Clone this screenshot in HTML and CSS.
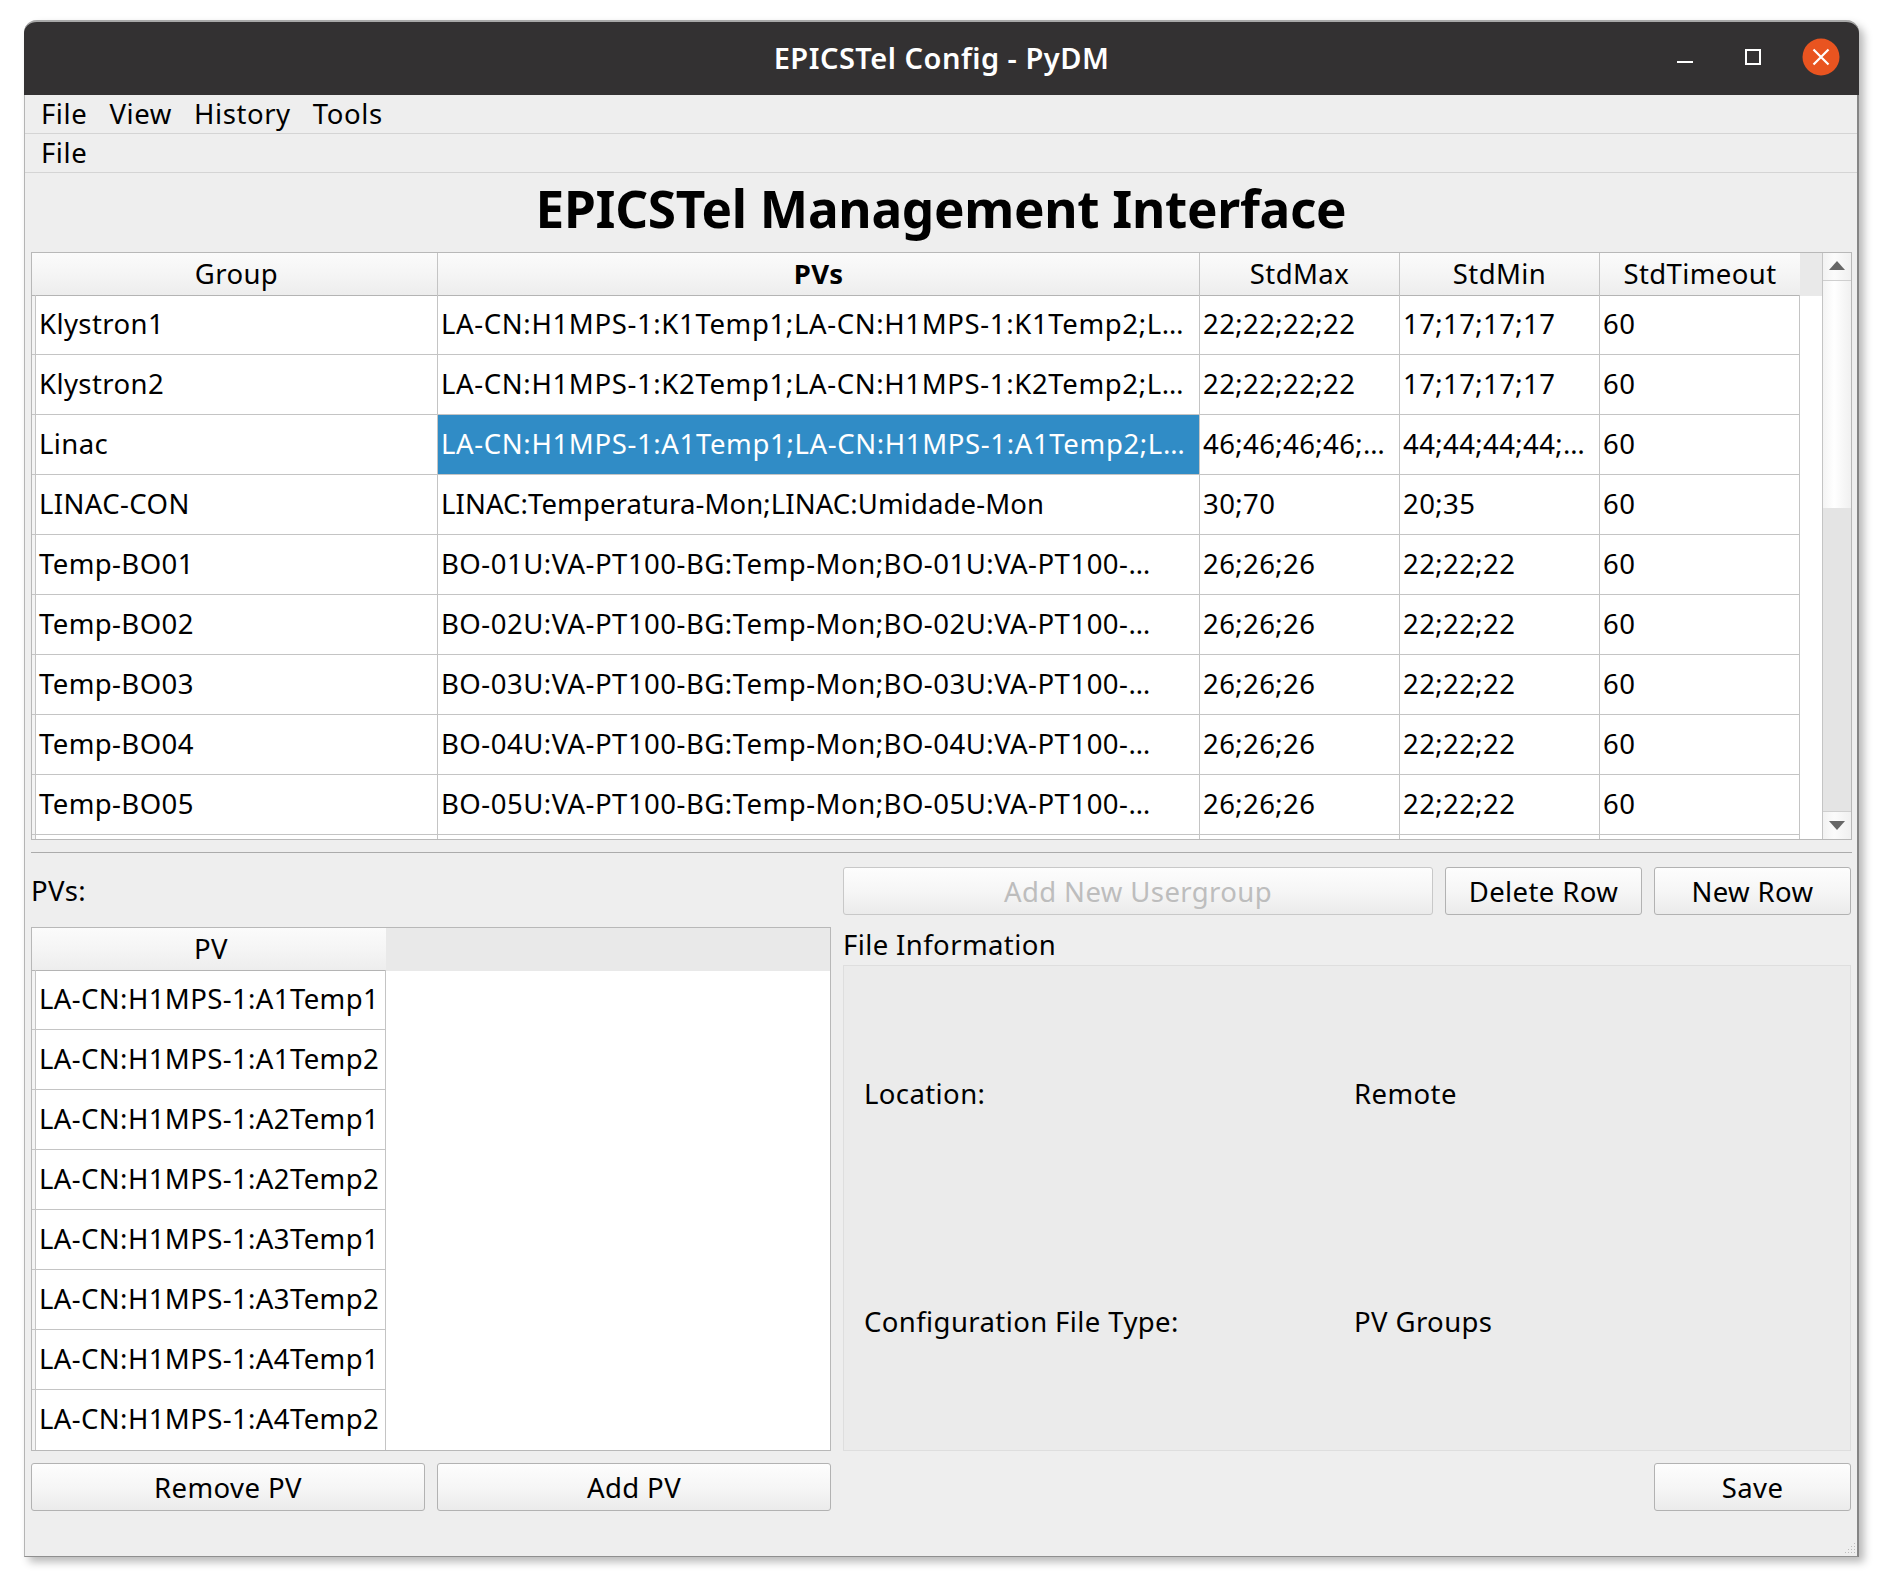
FILE: index.html
```html
<!DOCTYPE html>
<html lang="en">
<head>
<meta charset="utf-8">
<title>EPICSTel Config - PyDM</title>
<link rel="stylesheet" href="styles.css">
</head>
<body>
<div class="window">
  <header class="titlebar">
    <div></div>
    <div class="wintitle">EPICSTel Config - PyDM</div>
    <div class="controls">
      <svg class="ctl" viewBox="0 0 68 40"><rect x="24" y="24" width="16" height="2" fill="#fff"/></svg>
      <svg class="ctl" viewBox="0 0 68 40"><rect x="25" y="13" width="14" height="14" fill="none" stroke="#fff" stroke-width="2"/></svg>
      <svg class="ctl" viewBox="0 0 68 40"><circle cx="32" cy="20" r="18.5" fill="#e95420"/><path d="M24.500 12.500L39.500 27.500M39.500 12.500L24.500 27.500" stroke="#fff" stroke-width="2.200" fill="none"/></svg>
    </div>
  </header>
  <nav class="menubar"><span>File</span><span>View</span><span>History</span><span>Tools</span></nav>
  <nav class="menubar"><span>File</span></nav>
  <h1 class="heading">EPICSTel Management Interface</h1>

  <section class="maintable">
    <div class="mainview">
      <div class="hdr cols5">
        <div class="hcell hfirst">Group</div><div class="hcell hbold">PVs</div><div class="hcell">StdMax</div><div class="hcell">StdMin</div><div class="hcell hlast">StdTimeout</div><div class="hfill"></div>
      </div>
      <div class="row rows5"><div class="cell">Klystron1</div><div class="cell cell-long">LA-CN:H1MPS-1:K1Temp1;LA-CN:H1MPS-1:K1Temp2;L…</div><div class="cell">22;22;22;22</div><div class="cell">17;17;17;17</div><div class="cell">60</div></div>
      <div class="row rows5"><div class="cell">Klystron2</div><div class="cell cell-long">LA-CN:H1MPS-1:K2Temp1;LA-CN:H1MPS-1:K2Temp2;L…</div><div class="cell">22;22;22;22</div><div class="cell">17;17;17;17</div><div class="cell">60</div></div>
      <div class="row rows5"><div class="cell">Linac</div><div class="cell cell-long selected">LA-CN:H1MPS-1:A1Temp1;LA-CN:H1MPS-1:A1Temp2;L…</div><div class="cell">46;46;46;46;…</div><div class="cell">44;44;44;44;…</div><div class="cell">60</div></div>
      <div class="row rows5"><div class="cell">LINAC-CON</div><div class="cell cell-tight">LINAC:Temperatura-Mon;LINAC:Umidade-Mon</div><div class="cell">30;70</div><div class="cell">20;35</div><div class="cell">60</div></div>
      <div class="row rows5"><div class="cell">Temp-BO01</div><div class="cell cell-bo">BO-01U:VA-PT100-BG:Temp-Mon;BO-01U:VA-PT100-…</div><div class="cell">26;26;26</div><div class="cell">22;22;22</div><div class="cell">60</div></div>
      <div class="row rows5"><div class="cell">Temp-BO02</div><div class="cell cell-bo">BO-02U:VA-PT100-BG:Temp-Mon;BO-02U:VA-PT100-…</div><div class="cell">26;26;26</div><div class="cell">22;22;22</div><div class="cell">60</div></div>
      <div class="row rows5"><div class="cell">Temp-BO03</div><div class="cell cell-bo">BO-03U:VA-PT100-BG:Temp-Mon;BO-03U:VA-PT100-…</div><div class="cell">26;26;26</div><div class="cell">22;22;22</div><div class="cell">60</div></div>
      <div class="row rows5"><div class="cell">Temp-BO04</div><div class="cell cell-bo">BO-04U:VA-PT100-BG:Temp-Mon;BO-04U:VA-PT100-…</div><div class="cell">26;26;26</div><div class="cell">22;22;22</div><div class="cell">60</div></div>
      <div class="row rows5"><div class="cell">Temp-BO05</div><div class="cell cell-bo">BO-05U:VA-PT100-BG:Temp-Mon;BO-05U:VA-PT100-…</div><div class="cell">26;26;26</div><div class="cell">22;22;22</div><div class="cell">60</div></div>
      <div class="row rows5"><div class="cell"></div><div class="cell"></div><div class="cell"></div><div class="cell"></div><div class="cell"></div></div>
    </div>
    <div class="scrollbar">
      <div class="sbtn sbtn-up"><svg class="arrow" viewBox="0 0 16 9"><path d="M8 0L16 9H0Z" fill="#666"/></svg></div>
      <div class="strack"></div>
      <div class="shandle"></div>
      <div class="sbtn sbtn-down"><svg class="arrow" viewBox="0 0 16 9"><path d="M8 9L16 0H0Z" fill="#666"/></svg></div>
    </div>
  </section>

  <hr class="sep">

  <section class="lower">
    <div class="label">PVs:</div>
    <div class="actions">
      <button class="btn btn-wide" disabled>Add New Usergroup</button>
      <button class="btn btn-fixed">Delete Row</button>
      <button class="btn btn-fixed">New Row</button>
    </div>
    <div class="pvtable">
      <div class="hdr cols1"><div class="hcell hfirst hlast">PV</div><div class="hfill"></div></div>
      <div class="row rows1"><div class="cell">LA-CN:H1MPS-1:A1Temp1</div></div>
      <div class="row rows1"><div class="cell">LA-CN:H1MPS-1:A1Temp2</div></div>
      <div class="row rows1"><div class="cell">LA-CN:H1MPS-1:A2Temp1</div></div>
      <div class="row rows1"><div class="cell">LA-CN:H1MPS-1:A2Temp2</div></div>
      <div class="row rows1"><div class="cell">LA-CN:H1MPS-1:A3Temp1</div></div>
      <div class="row rows1"><div class="cell">LA-CN:H1MPS-1:A3Temp2</div></div>
      <div class="row rows1"><div class="cell">LA-CN:H1MPS-1:A4Temp1</div></div>
      <div class="row rows1 row-last"><div class="cell">LA-CN:H1MPS-1:A4Temp2</div></div>
    </div>
    <div class="fileinfo">
      <div class="filetitle">File Information</div>
      <div class="infobox">
        <div class="infocell">Location:</div><div class="infocell">Remote</div>
        <div class="infocell">Configuration File Type:</div><div class="infocell">PV Groups</div>
      </div>
    </div>
    <div class="pvbuttons">
      <button class="btn">Remove PV</button>
      <button class="btn">Add PV</button>
    </div>
    <div class="savebar"><button class="btn btn-fixed">Save</button></div>
  </section>

  <svg class="grip" viewBox="0 0 12 12"><g fill="#bdbdbd"><rect x="10" y="0" width="1" height="1"/><rect x="7" y="3" width="1" height="1"/><rect x="10" y="3" width="1" height="1"/><rect x="4" y="6" width="1" height="1"/><rect x="7" y="6" width="1" height="1"/><rect x="10" y="6" width="1" height="1"/><rect x="1" y="9" width="1" height="1"/><rect x="4" y="9" width="1" height="1"/><rect x="7" y="9" width="1" height="1"/><rect x="10" y="9" width="1" height="1"/></g></svg>
</div>
</body>
</html>
```

FILE: styles.css
```css
* { box-sizing: border-box; }
html, body { margin: 0; background: #fff; }
body {
  height: 1585px;
  padding: 20px 0 0 24px;
  font-family: "Noto Sans", sans-serif;
  font-size: 27.5px;
  color: #000;
  overflow: hidden;
}
.window {
  position: relative;
  width: 1835px;
  height: 1537px;
  background: #eeeeee;
  border-left: 1px solid #b4b4b4;
  border-right: 2px solid #858585;
  border-bottom: 1px solid #8f8f8f;
  border-radius: 13px 13px 0 0;
  box-shadow: 5px 5px 9px rgba(0,0,0,.28);
  letter-spacing: 0.4px;
}
.titlebar {
  display: grid;
  grid-template-columns: 1fr auto 1fr;
  align-items: center;
  height: 75px;
  margin-left: -1px;
  margin-right: -2px;
  background: #333132;
  border-top: 2px solid #a8a8a8;
  border-radius: 13px 13px 0 0;
  color: #fff;
}
.wintitle { font-size: 29px; font-weight: 600; letter-spacing: 0.5px; padding-bottom: 2px; }
.controls { display: flex; justify-content: flex-end; padding-right: 2px; padding-bottom: 3px; }
.ctl { width: 68px; height: 40px; display: block; }
.menubar {
  display: flex;
  gap: 22px;
  height: 39px;
  padding: 0 0 2px 16px;
  align-items: center;
  letter-spacing: 0.6px;
  border-bottom: 1px solid #d4d4d4;
}
.heading {
  margin: 0;
  height: 79px;
  font-size: 51.3px;
  line-height: 71px;
  font-weight: 700;
  text-align: center;
  letter-spacing: -0.3px;
}
.maintable {
  display: flex;
  height: 588px;
  margin: 0 5px 0 6px;
  background: #fff;
  border: 1px solid #b8b8b8;
}
.mainview { width: 1790px; overflow: hidden; }
.hdr { height: 42px; background: #e9e9e9; }
.cols5 { display: grid; grid-template-columns: 406px 762px 200px 200px 200px 22px; }
.cols1 { display: grid; grid-template-columns: 354px 1fr; }
.hcell {
  text-align: center;
  line-height: 42px;
  background: linear-gradient(#fbfbfb, #f5f5f5 50%, #ededed);
  border-right: 1px solid #c4c4c4;
  border-bottom: 1px solid #b4b4b4;
}
.hfirst { padding-left: 4px; }
.hbold { font-weight: 700; }
.hlast { border-right: 0; }
.hfill { background: #e9e9e9; }
.row {
  display: grid;
  height: 60px;
  border-bottom: 1px solid #c4c4c4;
  background: linear-gradient(to right, #f4f4f4 3px, transparent 3px);
}
.rows5 { width: 1768px; grid-template-columns: 406px 762px 200px 200px 200px; }
.rows1 { width: 354px; grid-template-columns: 354px; }
.cell {
  line-height: 58px;
  padding-left: 3px;
  white-space: nowrap;
  overflow: hidden;
  border-right: 1px solid #c4c4c4;
}
.cell:first-child { margin-left: 3px; padding-left: 3px; border-left: 1px solid #c4c4c4; }
.cell-long { letter-spacing: 0.65px; }
.cell-bo { letter-spacing: 0.5px; }
.cell-tight { letter-spacing: 0.1px; }
.selected { background: #308cc6; color: #fff; }
.scrollbar {
  display: flex;
  flex-direction: column;
  width: 29px;
  border-left: 1px solid #c4c4c4;
}
.sbtn {
  display: flex;
  align-items: center;
  justify-content: center;
  height: 28px;
  background: linear-gradient(to right, #f2f2f2, #fbfbfb 40%, #f0f0f0);
}
.sbtn-up { border-bottom: 1px solid #cfcfcf; padding-bottom: 3px; }
.sbtn-down { border-top: 1px solid #cfcfcf; }
.arrow { width: 16px; height: 9px; display: block; }
.strack { height: 227px; background: linear-gradient(to right, #f4f4f4, #ffffff 40%, #f0f0f0); }
.shandle { flex: 1; background: #e4e4e4; }
.sep {
  height: 1px;
  margin: 12px 5px 14px 6px;
  border: 0;
  background: #ababab;
}
.lower {
  display: grid;
  grid-template-columns: 800px 1008px;
  grid-template-rows: 48px 524px 48px;
  column-gap: 12px;
  row-gap: 12px;
  margin-left: 6px;
}
.label { line-height: 47px; }
.actions { display: flex; gap: 12px; }
.btn {
  height: 48px;
  padding: 0;
  font: inherit;
  letter-spacing: inherit;
  color: #000;
  text-align: center;
  background: linear-gradient(#fdfdfd, #f6f6f6 50%, #ebebeb);
  border: 1px solid #b2b2b2;
  border-radius: 3px;
}
.btn[disabled] { color: #bdbdbd; border-color: #c8c8c8; }
.btn-wide { flex: 1; }
.btn-fixed { width: 197px; }
.pvtable {
  background: #fff;
  border: 1px solid #b8b8b8;
  overflow: hidden;
}
.row-last { border-bottom: 0; }
.fileinfo { display: flex; flex-direction: column; }
.filetitle { height: 38px; line-height: 36px; }
.infobox {
  flex: 1;
  display: grid;
  grid-template-columns: 490px 1fr;
  grid-template-rows: 228px 228px;
  padding: 13px 0 0 20px;
  background: #ebebeb;
  border: 1px solid #dedede;
}
.infocell { align-self: center; }
.pvbuttons { display: grid; grid-template-columns: 394px 394px; gap: 12px; }
.savebar { display: flex; justify-content: flex-end; }
.grip { position: absolute; right: 1px; bottom: 1px; width: 12px; height: 12px; }
```
